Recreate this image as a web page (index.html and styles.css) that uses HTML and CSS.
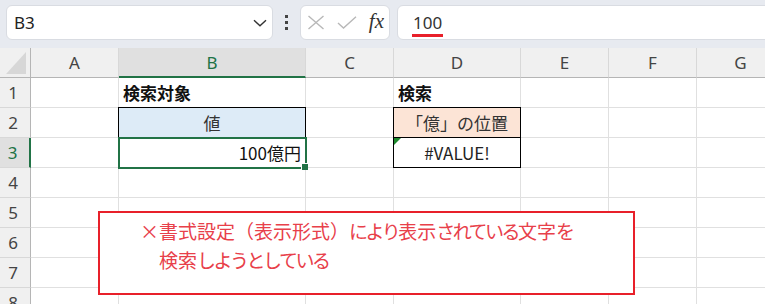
FILE: index.html
```html
<!DOCTYPE html>
<html lang="ja">

<head>
    <meta charset="UTF-8" />
    <meta name="viewport" content="width=device-width, initial-scale=1.0" />
    <title>検索対象</title>
    <link rel="stylesheet" href="styles.css">
</head>

<body>
    <div class="toolbar">
        <div class="namebox">
            <span>B3</span>
            <svg class="chevron" width="14" height="8" viewBox="0 0 14 8">
                <path d="M1 1.2 L7 6.8 L13 1.2" fill="none" stroke="#333" stroke-width="1.4" />
            </svg>
        </div>
        <div class="grip">
            <i></i><i></i><i></i>
        </div>
        <div class="fxbox">
            <svg width="18" height="15" viewBox="0 0 18 15">
                <path d="M1.5 1 L16.5 14 M16.5 1 L1.5 14" stroke="#b8b8b8" stroke-width="1.4" fill="none" />
            </svg>
            <svg width="20" height="13" viewBox="0 0 20 13">
                <path d="M1 7 L6.5 12 L19 0.8" stroke="#b8b8b8" stroke-width="1.4" fill="none" />
            </svg>
            <span class="fx">fx</span>
        </div>
        <div class="formula">
            <span class="formula-text">100</span>
        </div>
    </div>

    <div class="sheet">
        <div class="corner"></div>
        <div class="colhead">A</div>
        <div class="colhead active">B</div>
        <div class="colhead">C</div>
        <div class="colhead">D</div>
        <div class="colhead">E</div>
        <div class="colhead">F</div>
        <div class="colhead">G</div>

        <div class="rowhead">1</div>
        <div class="cell"></div>
        <div class="cell bold">検索対象</div>
        <div class="cell"></div>
        <div class="cell bold">検索</div>
        <div class="cell"></div>
        <div class="cell"></div>
        <div class="cell"></div>

        <div class="rowhead">2</div>
        <div class="cell"></div>
        <div class="cell boxed blue center">値</div>
        <div class="cell"></div>
        <div class="cell boxed peach center">「億」の位置</div>
        <div class="cell"></div>
        <div class="cell"></div>
        <div class="cell"></div>

        <div class="rowhead active">3</div>
        <div class="cell"></div>
        <div class="cell selected right">100億円<span class="handle"></span></div>
        <div class="cell"></div>
        <div class="cell boxed center error">#VALUE!</div>
        <div class="cell"></div>
        <div class="cell"></div>
        <div class="cell"></div>

        <div class="rowhead">4</div>
        <div class="cell"></div><div class="cell"></div><div class="cell"></div><div class="cell"></div>
        <div class="cell"></div><div class="cell"></div><div class="cell"></div>

        <div class="rowhead">5</div>
        <div class="cell"></div><div class="cell"></div><div class="cell"></div><div class="cell"></div>
        <div class="cell"></div><div class="cell"></div><div class="cell"></div>

        <div class="rowhead">6</div>
        <div class="cell"></div><div class="cell"></div><div class="cell"></div><div class="cell"></div>
        <div class="cell"></div><div class="cell"></div><div class="cell"></div>

        <div class="rowhead">7</div>
        <div class="cell"></div><div class="cell"></div><div class="cell"></div><div class="cell"></div>
        <div class="cell"></div><div class="cell"></div><div class="cell"></div>

        <div class="rowhead">8</div>
        <div class="cell"></div><div class="cell"></div><div class="cell"></div><div class="cell"></div>
        <div class="cell"></div><div class="cell"></div><div class="cell"></div>

        <!-- 注意書きの吹き出し (かなは少し詰める) -->
        <div class="note">
            <p>×書式設定（表示形式）<span class="kana">により</span>表示<span class="kana">されている</span>文字<span class="kana">を</span></p>
            <p>検索<span class="kana">しようとしている</span></p>
        </div>
    </div>
</body>

</html>
```

FILE: styles.css
```css
html,
body {
    margin: 0;
    width: 765px;
    height: 304px;
    overflow: hidden;
    background: #fff;
    font-family: "Noto Sans", "Noto Sans CJK JP", sans-serif;
}

.toolbar {
    display: flex;
    align-items: flex-start;
    height: 48px;
    padding: 5px 0 0 6px;
    box-sizing: border-box;
    background-color: #e7eaf0;
    overflow: hidden;
}

.toolbar > div {
    flex-shrink: 0;
}

.namebox,
.fxbox,
.formula {
    height: 35px;
    box-sizing: border-box;
    background: #fff;
    border: 1px solid #d9dce2;
    border-radius: 6px;
    display: flex;
    align-items: center;
}

.namebox {
    width: 267px;
    padding: 0 5px 0 7px;
    justify-content: space-between;
    font-size: 17px;
    color: #222;
}

.grip {
    width: 10px;
    margin: 0 9px 0 8px;
    height: 35px;
    display: flex;
    flex-direction: column;
    align-items: center;
    justify-content: center;
    gap: 3px;
}

.grip i {
    width: 3px;
    height: 3px;
    background: #444;
}

.fxbox {
    width: 90px;
    padding: 0 5px 0 6px;
    justify-content: space-between;
}

.fx {
    font-family: "Liberation Serif", serif;
    font-style: italic;
    font-size: 21px;
    color: #333;
    line-height: 1;
    margin-top: -2px;
}

.formula {
    width: 420px;
    margin-left: 7px;
    padding-left: 14px;
}

.formula-text {
    font-size: 17px;
    color: #333;
    padding: 0 1px;
    border-bottom: 3px solid #e8202a;
    line-height: 22px;
    margin-top: 3px;
}

.sheet {
    position: relative;
    display: grid;
    grid-template-columns: 31px 88px 187px 88px 127px 88px 88px 88px;
    grid-auto-rows: 30px;
    font-family: "Noto Sans CJK JP", sans-serif;
    font-size: 17px;
    color: #111;
}

.corner,
.colhead,
.rowhead {
    background: #f0f0f0;
    color: #444;
    font-family: "Noto Sans", sans-serif;
    font-size: 17px;
    display: flex;
    align-items: center;
    justify-content: center;
    box-sizing: border-box;
}

.corner {
    border-right: 1px solid #b5b5b5;
    border-bottom: 1px solid #b5b5b5;
    position: relative;
}

.corner::after {
    content: "";
    position: absolute;
    right: 4px;
    bottom: 3px;
    width: 20px;
    height: 22px;
    background: #d7d7d7;
    clip-path: polygon(100% 0, 100% 100%, 0 100%);
}

.colhead {
    border-right: 1px solid #d8d8d8;
    border-bottom: 1px solid #b5b5b5;
}

.colhead.active {
    background: #e0e0e0;
    color: #217346;
    border-bottom: 2px solid #217346;
}

.rowhead {
    border-right: 1px solid #b5b5b5;
    border-bottom: 1px solid #d8d8d8;
    padding-right: 4px;
}

.rowhead.active {
    background: #e0e0e0;
    color: #217346;
    border-right: 2px solid #217346;
}

.cell {
    position: relative;
    border-right: 1px solid #e0e0e0;
    border-bottom: 1px solid #e0e0e0;
    display: flex;
    align-items: center;
    padding: 0 4px;
    white-space: nowrap;
    box-sizing: border-box;
}

.bold {
    font-weight: bold;
}

.center {
    justify-content: center;
}

.right {
    justify-content: flex-end;
}

.boxed {
    border-right-color: #000;
    border-bottom-color: #000;
    box-shadow: -1px 0 0 #000, 0 -1px 0 #000, -1px -1px 0 #000;
}

.blue {
    background: #ddebf7;
    color: #333;
}

.peach {
    background: #fce4d6;
    color: #333;
}

.error {
    color: #222;
}

.error::before {
    content: "";
    position: absolute;
    left: 0;
    top: 0;
    width: 7px;
    height: 7px;
    background: #1e8a2e;
    clip-path: polygon(0 0, 100% 0, 0 100%);
}

.selected {
    outline: 2px solid #217346;
    outline-offset: -1px;
    z-index: 1;
}

.handle {
    position: absolute;
    right: -3px;
    bottom: -3px;
    width: 6px;
    height: 6px;
    background: #217346;
    border: 1px solid #fff;
    border-right: 0;
    border-bottom: 0;
}

.note {
    position: absolute;
    left: 98px;
    top: 163px;
    width: 537px;
    height: 84px;
    box-sizing: border-box;
    border: 2px solid #e8202a;
    background: #fff;
    padding: 3px 0 0 40px;
    color: #e8404a;
    font-size: 19px;
    line-height: 29px;
    white-space: nowrap;
    z-index: 2;
}

.note p {
    margin: 0;
}

.note p + p {
    padding-left: 19px;
}

.kana {
    letter-spacing: -2.5px;
}
```
